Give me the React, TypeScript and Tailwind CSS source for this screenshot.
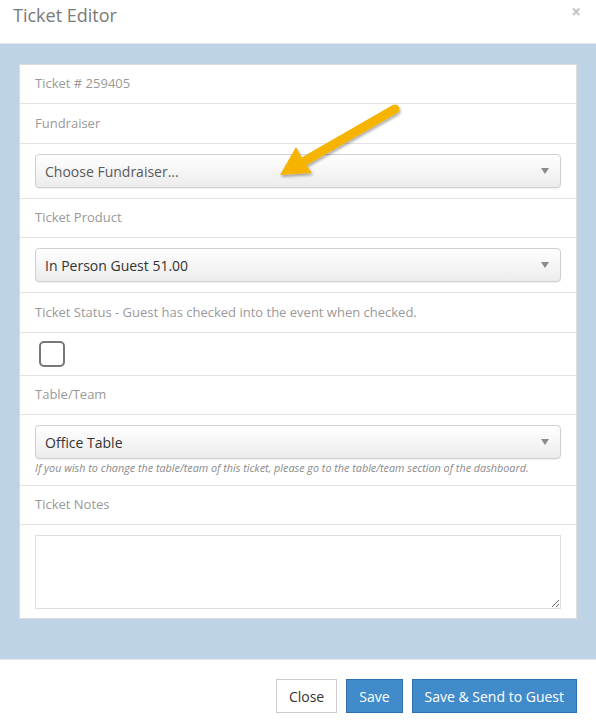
import React from "react";

const font = { fontFamily: '"Open Sans", "Noto Sans", sans-serif' };

function Caret() {
  return (
    <svg width="8" height="6" viewBox="0 0 8 6" className="shrink-0">
      <path d="M0 0 L8 0 L4 6 Z" fill="#8a8a8a" />
    </svg>
  );
}

function Select({ value, muted }: { value: string; muted?: boolean }) {
  return (
    <div className="h-[34px] flex items-center justify-between pl-[9px] pr-[11px] rounded-[4px] border border-[#cfcfcf] bg-gradient-to-b from-[#ffffff] to-[#ececec] shadow-[0_1px_1px_rgba(0,0,0,0.06)]">
      <span className={`text-[14px] ${muted ? "text-[#5a5a5a]" : "text-[#333]"}`}>{value}</span>
      <Caret />
    </div>
  );
}

function LabelRow({ text, h, first }: { text: string; h: string; first?: boolean }) {
  return (
    <div className={`${h} flex items-center px-[15px] text-[13px] text-[#999] ${first ? "" : "border-t border-[#e3e3e3]"}`}>
      {text}
    </div>
  );
}

export default function App() {
  return (
    <div className="relative w-[596px] h-[724px] bg-white overflow-hidden" style={font}>
      {/* Header */}
      <div className="h-[44px] border-b border-[#e5e5e5] flex items-start justify-between pl-[13px] pr-[15px] pt-[3px]">
        <div className="text-[18px] text-[#7a7a7a] leading-[24px]">Ticket Editor</div>
        <div className="text-[17px] font-bold text-[#c4c4c4] leading-[18px] mt-[0px]">×</div>
      </div>

      {/* Body */}
      <div className="bg-[#bfd3e6] pl-[19px] pr-[19px] pt-[20px] pb-[40px]">
        <div className="bg-white border border-[#dcdcdc]">
          <LabelRow text="Ticket # 259405" h="h-[38px]" first />
          <LabelRow text="Fundraiser" h="h-[40px]" />
          <div className="h-[55px] border-t border-[#e3e3e3] px-[15px] pt-[10px]">
            <Select value="Choose Fundraiser..." muted />
          </div>
          <LabelRow text="Ticket Product" h="h-[39px]" />
          <div className="h-[55px] border-t border-[#e3e3e3] px-[15px] pt-[10px]">
            <Select value="In Person Guest 51.00" />
          </div>
          <LabelRow text="Ticket Status - Guest has checked into the event when checked." h="h-[40px]" />
          <div className="h-[43px] border-t border-[#e3e3e3] pl-[19px] pt-[8px]">
            <div className="w-[26px] h-[26px] rounded-[5px] border-2 border-[#777] bg-white" />
          </div>
          <LabelRow text="Table/Team" h="h-[39px]" />
          <div className="h-[71px] border-t border-[#e3e3e3] px-[15px] pt-[10px]">
            <Select value="Office Table" />
            <div className="mt-[2px] text-[10.8px] italic text-[#8a8a8a] leading-[14px] whitespace-nowrap">
              If you wish to change the table/team of this ticket, please go to the table/team section of the dashboard.
            </div>
          </div>
          <LabelRow text="Ticket Notes" h="h-[39px]" />
          <div className="h-[94px] border-t border-[#e3e3e3] px-[15px] pt-[10px]">
            <textarea className="block w-full h-[74px] border border-[#dedede] bg-white outline-none resize-y" />
          </div>
        </div>
      </div>

      {/* Footer */}
      <div className="border-t border-[#e5e5e5] flex justify-end gap-[9px] pr-[19px] pt-[19px]">
        <button className="h-[34px] px-[12px] border border-[#cccccc] bg-white text-[14px] text-[#333]">Close</button>
        <button className="h-[34px] px-[12px] border border-[#2f6fab] bg-[#428bca] text-[14px] text-white">Save</button>
        <button className="h-[34px] px-[12px] border border-[#2f6fab] bg-[#428bca] text-[14px] text-white">Save &amp; Send to Guest</button>
      </div>

      {/* Annotation arrow */}
      <svg className="absolute left-0 top-0 pointer-events-none" width="596" height="724">
        <defs>
          <filter id="sh" x="-20%" y="-20%" width="140%" height="140%">
            <feDropShadow dx="1" dy="2" stdDeviation="1.6" floodColor="#000" floodOpacity="0.35" />
          </filter>
        </defs>
        <g filter="url(#sh)">
          <line x1="395" y1="109" x2="303" y2="162" stroke="#f6b400" strokeWidth="9" strokeLinecap="round" />
          <path d="M280 175 L296 147 L303 160 L312 173 Z" fill="#f6b400" />
        </g>
      </svg>
    </div>
  );
}
